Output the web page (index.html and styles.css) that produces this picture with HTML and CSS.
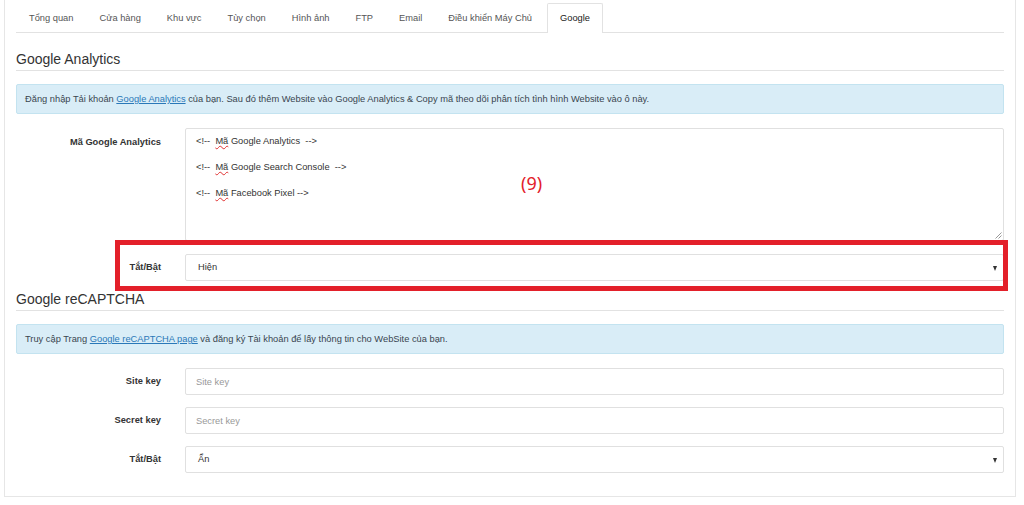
FILE: index.html
```html
<!DOCTYPE html>
<html lang="vi">
<head>
<meta charset="utf-8">
<title>Google</title>
<link rel="stylesheet" href="styles.css">
</head>
<body>
<div class="panel">
  <ul class="tabs">
    <li class="tab">Tổng quan</li>
    <li class="tab">Cửa hàng</li>
    <li class="tab">Khu vực</li>
    <li class="tab">Tùy chọn</li>
    <li class="tab">Hình ảnh</li>
    <li class="tab">FTP</li>
    <li class="tab">Email</li>
    <li class="tab">Điều khiển Máy Chủ</li>
    <li class="tab active">Google</li>
  </ul>

  <h3 class="section-title first">Google Analytics</h3>
  <div class="alert">Đăng nhập Tải khoản <a href="#">Google Analytics</a> của bạn. Sau đó thêm Website vào Google Analytics &amp; Copy mã theo dõi phân tích tình hình Website vào ô này.</div>

  <div class="form">
    <label class="label">Mã Google Analytics</label>
    <div class="textarea">
      <div class="line">&lt;!--&nbsp; <span class="spell">Mã</span> Google Analytics&nbsp; --&gt;</div>
      <div class="line">&nbsp;</div>
      <div class="line">&lt;!--&nbsp; <span class="spell">Mã</span> Google Search Console&nbsp; --&gt;</div>
      <div class="line">&nbsp;</div>
      <div class="line">&lt;!--&nbsp; <span class="spell">Mã</span> Facebook Pixel --&gt;</div>
      <svg class="grip" width="8" height="8" viewBox="0 0 8 8"><path d="M7.5 1.5 L1.5 7.5 M7.5 4.5 L4.5 7.5" stroke="#999" stroke-width="1" fill="none"/></svg>
    </div>

    <label class="label mid">Tắt/Bật</label>
    <div class="select">Hiện</div>
  </div>

  <h3 class="section-title second">Google reCAPTCHA</h3>
  <div class="alert">Truy cập Trang <a href="#">Google reCAPTCHA page</a> và đăng ký Tài khoản để lấy thông tin cho WebSite của bạn.</div>

  <div class="form">
    <label class="label mid">Site key</label>
    <input class="input" type="text" placeholder="Site key">
    <label class="label mid">Secret key</label>
    <input class="input" type="text" placeholder="Secret key">
    <label class="label mid">Tắt/Bật</label>
    <div class="select">Ẩn</div>
  </div>
</div>

<div class="callout"></div>
<div class="callout-num">(9)</div>
</body>
</html>
```
FILE: styles.css
```css
html, body {
  margin: 0;
  padding: 0;
  background: #fff;
}
body {
  font-family: "Liberation Sans", Arial, sans-serif;
  color: #333;
  position: relative;
  width: 1024px;
  height: 505px;
  overflow: hidden;
}
.panel {
  box-sizing: border-box;
  margin-left: 4px;
  width: 1012px;
  height: 497px;
  border: 1px solid #e6e6e6;
  border-top: none;
  padding: 3px 11px 0 11px;
}
.tabs {
  list-style: none;
  margin: 0;
  padding: 0;
  display: flex;
  border-bottom: 1px solid #e2e2e2;
  height: 29px;
}
.tab {
  font-size: 9.3px;
  color: #555;
  padding: 0 12px;
  line-height: 28px;
  height: 28px;
  border: 1px solid transparent;
  border-bottom: none;
}
.tab.active {
  border-color: #e2e2e2;
  background: #fff;
  color: #222;
  height: 29px;
  margin-left: 2px;
  border-radius: 2px 2px 0 0;
}
.section-title {
  font-size: 14px;
  font-weight: normal;
  line-height: 16px;
  margin: 0;
  padding-bottom: 3px;
  border-bottom: 1px solid #e2e2e2;
  color: #333;
}
.section-title.first { margin-top: 18px; }
.section-title.second { margin-top: 10px; }
.alert {
  margin-top: 13px;
  height: 28px;
  line-height: 28px;
  padding: 0 8px;
  background: #d9edf7;
  border: 1px solid #c3e3f0;
  border-radius: 2px;
  font-size: 9.3px;
  color: #3a4650;
  white-space: nowrap;
}
.alert a {
  color: #2a78b8;
  text-decoration: underline;
}
.form {
  margin-top: 14px;
  display: grid;
  grid-template-columns: 169px 1fr;
  row-gap: 12px;
}
.label {
  font-size: 9.3px;
  font-weight: bold;
  color: #333;
  text-align: right;
  padding-right: 24px;
  line-height: 13px;
  padding-top: 8px;
}
.label.mid {
  line-height: 27px;
  padding-top: 0;
}
.textarea {
  position: relative;
  box-sizing: border-box;
  height: 113px;
  border: 1px solid #e0e0e0;
  border-radius: 2px;
  padding: 6px 10px;
  font-size: 9.3px;
  line-height: 13px;
  color: #333;
  margin-bottom: 1px;
}
.spell {
  text-decoration: underline wavy #e03030;
  text-decoration-thickness: 1px;
  text-underline-offset: 1px;
}
.grip {
  position: absolute;
  right: 1px;
  bottom: 1px;
}
.select, .input {
  box-sizing: border-box;
  height: 27px;
  border: 1px solid #e0e0e0;
  border-radius: 2px;
  font-family: "Liberation Sans", Arial, sans-serif;
  font-size: 9.3px;
  color: #333;
  background: #fff;
  margin: 0;
  outline: none;
}
.select {
  position: relative;
  line-height: 25px;
  padding-left: 12px;
}
.select::after {
  content: "";
  position: absolute;
  right: 6px;
  top: 11px;
  border-left: 2.5px solid transparent;
  border-right: 2.5px solid transparent;
  border-top: 5px solid #333;
}
.input {
  width: 100%;
  padding: 0 10px;
}
.input::placeholder {
  color: #999;
}
.callout {
  position: absolute;
  left: 115px;
  top: 240px;
  width: 893px;
  height: 51px;
  box-sizing: border-box;
  border: 5px solid #e3202a;
}
.callout-num {
  position: absolute;
  left: 521px;
  top: 171px;
  font-family: "Noto Sans", sans-serif;
  font-size: 18px;
  color: #e3202a;
}
```
